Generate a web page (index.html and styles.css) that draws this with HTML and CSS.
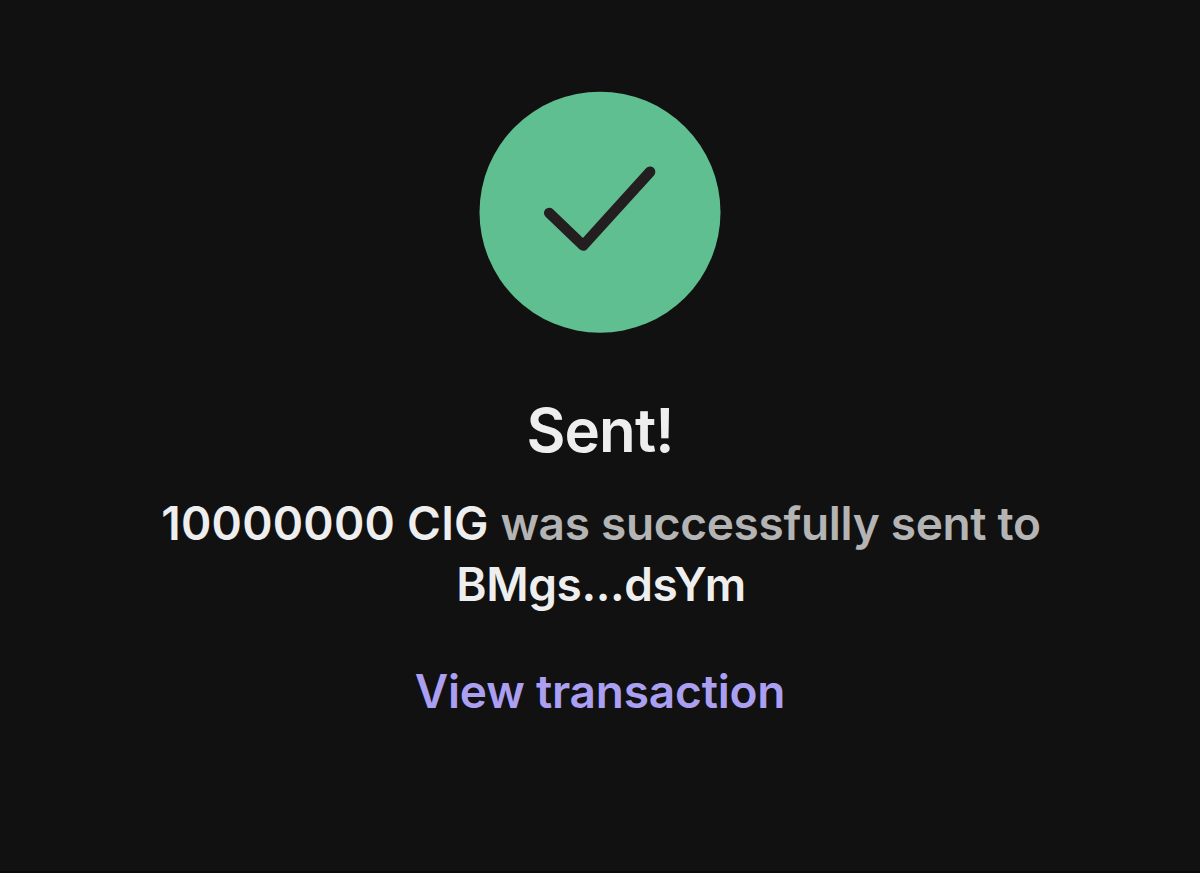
FILE: index.html
```html
<!DOCTYPE html>
<html lang="en">
<head>
    <meta charset="UTF-8">
    <meta name="viewport" content="width=device-width, initial-scale=1.0">
    <title>Sent</title>
    <link rel="stylesheet" href="styles.css">
</head>
<body>
    <main class="container">
        <svg class="status-icon" viewBox="0 0 242 242" aria-hidden="true">
            <circle cx="121" cy="121.2" r="120.5" fill="#60bf91"/>
            <path d="M70.3 122 L104.2 154.5 L171 80.8" fill="none" stroke="#231f20" stroke-width="10.7" stroke-linecap="round" stroke-linejoin="round"/>
        </svg>
        <h1>Sent!</h1>
        <p class="message">
            <span class="line"><strong class="amount">10000000 CIG</strong> <span class="text">was successfully sent to</span></span>
            <strong class="address">BMgs...dsYm</strong>
        </p>
        <a class="link" href="#">View transaction</a>
    </main>
</body>
</html>
```

FILE: styles.css
```css
body {
    margin: 0;
    background-color: #111;
    font-family: Inter, sans-serif;
    color: #eee;
}
.container {
    display: flex;
    flex-direction: column;
    align-items: center;
    box-sizing: border-box;
    height: 873px;
    padding-top: 91px;
    border-bottom: 2px solid #0b090a;
}
.status-icon {
    width: 242px;
    height: 242px;
}
h1 {
    margin: 57px 0 0;
    font-size: 60px;
    line-height: 80px;
    font-weight: 600;
    letter-spacing: -0.9px;
}
.message {
    display: flex;
    flex-direction: column;
    align-items: center;
    margin: 23px 0 0;
    padding-left: 2px;
    color: #b4b4b4;
    font-size: 46px;
    line-height: 61px;
    font-weight: 600;
    white-space: nowrap;
}
.message strong {
    color: #eee;
    font-weight: 600;
}
.amount {
    letter-spacing: 0.25px;
}
.message .text {
    letter-spacing: -0.32px;
}
.address {
    letter-spacing: -0.4px;
}
.link {
    margin-top: 45px;
    color: #ab9ff2;
    font-size: 46px;
    line-height: 62px;
    font-weight: 600;
    letter-spacing: -0.2px;
    text-decoration: none;
}
```
